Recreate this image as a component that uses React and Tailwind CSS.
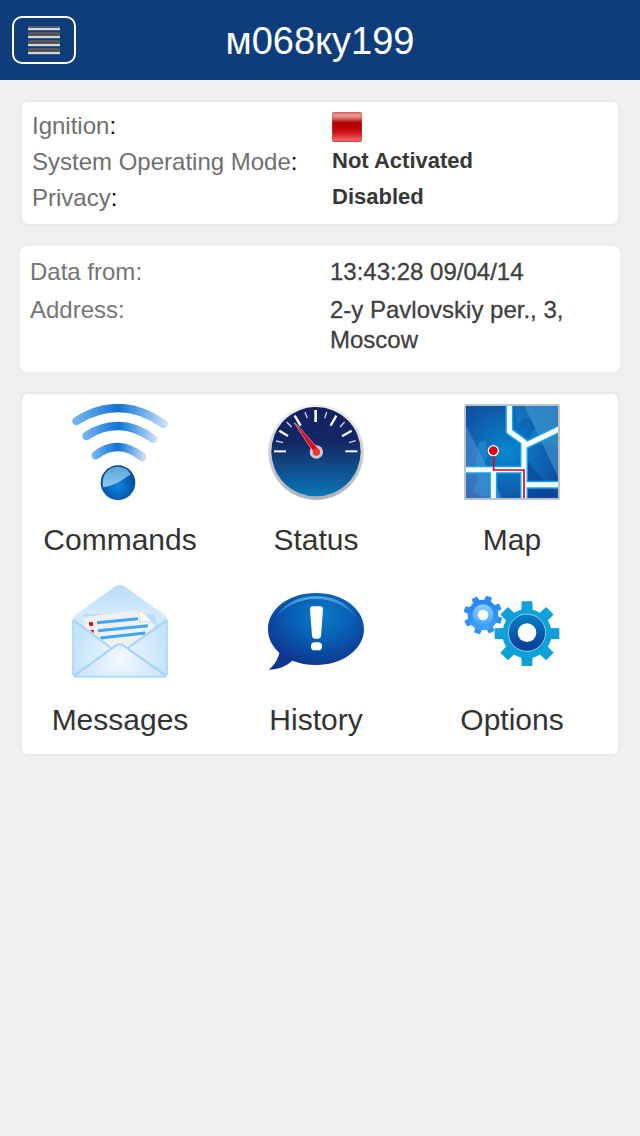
import React from "react";

function MenuIcon() {
  return (
    <svg viewBox="0 0 36 32" className="h-8 w-9" aria-hidden="true">
      <rect x="2" y="2" width="32" height="2" fill="#50596a" />
      {[4, 12, 20, 28].map((y) => (
        <g key={y}>
          {y > 4 && <rect x="2" y={y - 4} width="32" height="4" fill="#55565a" />}
          <rect x="2" y={y} width="32" height="2" fill="#d6d6d6" />
          <rect x="2" y={y + 2} width="32" height="1" fill="#6b7c98" opacity=".5" />
        </g>
      ))}
    </svg>
  );
}

function IgnitionOff() {
  return (
    <svg viewBox="0 0 30 30" className="h-[30px] w-[30px]" role="img" aria-label="Off">
      <defs>
        <linearGradient id="ign" x1="0" y1="0" x2="0" y2="1">
          <stop offset="0" stopColor="#d86a66" />
          <stop offset=".12" stopColor="#e59a94" />
          <stop offset=".26" stopColor="#cf4a45" />
          <stop offset=".34" stopColor="#b00a08" />
          <stop offset=".5" stopColor="#b80000" />
          <stop offset=".7" stopColor="#d2161a" />
          <stop offset=".93" stopColor="#f06468" />
          <stop offset="1" stopColor="#d04044" />
        </linearGradient>
      </defs>
      <rect width="30" height="30" rx="2" fill="url(#ign)" />
      <rect x=".5" y=".5" width="29" height="29" rx="2" fill="none" stroke="#d04a4a" strokeOpacity=".4" />
    </svg>
  );
}

function CommandsIcon() {
  return (
    <svg viewBox="36 42 288 288" className="h-24 w-24" aria-hidden="true">
      <defs>
        <linearGradient id="wave" gradientUnits="userSpaceOnUse" x1="36" y1="0" x2="324" y2="0">
          <stop offset="0" stopColor="#7cb8f0" />
          <stop offset=".48" stopColor="#1173d4" />
          <stop offset=".7" stopColor="#5ba3e6" />
          <stop offset="1" stopColor="#d3e6fa" />
        </linearGradient>
        <linearGradient id="waveMid" gradientUnits="userSpaceOnUse" x1="66" y1="0" x2="293" y2="0">
          <stop offset="0" stopColor="#7cb8f0" />
          <stop offset=".48" stopColor="#1173d4" />
          <stop offset=".7" stopColor="#5ba3e6" />
          <stop offset="1" stopColor="#d3e6fa" />
        </linearGradient>
        <linearGradient id="waveLow" gradientUnits="userSpaceOnUse" x1="94" y1="0" x2="259" y2="0">
          <stop offset="0" stopColor="#7cb8f0" />
          <stop offset=".48" stopColor="#1173d4" />
          <stop offset=".7" stopColor="#5ba3e6" />
          <stop offset="1" stopColor="#d3e6fa" />
        </linearGradient>
        <radialGradient id="ball" cx=".5" cy=".6" r=".55">
          <stop offset="0" stopColor="#0a86e4" />
          <stop offset=".6" stopColor="#0563b6" />
          <stop offset="1" stopColor="#024688" />
        </radialGradient>
        <linearGradient id="ballTop" x1="0" y1="0" x2="0" y2="1">
          <stop offset="0" stopColor="#5aa5da" />
          <stop offset="1" stopColor="#8cc8ee" />
        </linearGradient>
      </defs>
      <g fill="none" strokeWidth="25" strokeLinecap="round">
        <path d="M49 93Q108 54 176 54T311 102" stroke="url(#wave)" />
        <path d="M79 138Q122 108 175 108T280 147" stroke="url(#waveMid)" />
        <path d="M107 196Q138 171 174 171T247 201" stroke="url(#waveLow)" />
      </g>
      <circle cx="174" cy="278" r="52" fill="url(#ball)" />
      <path d="M130 292C122 262 140 230 174 230C194 230 208 241 212 254C187 265 182 282 130 292Z" fill="url(#ballTop)" />
    </svg>
  );
}

const TICKS = [
  [54, 184, 90, 184, 6], [60, 153, 81, 158, 4], [70, 122, 96, 138, 7],
  [92, 96, 107, 111, 4], [116, 77, 134, 107, 7], [147, 67, 154, 85, 4],
  [179, 60, 179, 96, 8], [212, 66, 206, 85, 4], [241, 77, 224, 107, 7],
  [266, 96, 252, 111, 4], [287, 122, 258, 139, 7], [299, 152, 279, 158, 4],
  [268, 184, 304, 184, 6],
];

function StatusIcon() {
  return (
    <svg viewBox="36 42 288 288" className="h-24 w-24" aria-hidden="true">
      <defs>
        <linearGradient id="dial" x1="0" y1="0" x2="0" y2="1">
          <stop offset="0" stopColor="#142060" />
          <stop offset=".4" stopColor="#142766" />
          <stop offset=".6" stopColor="#11437f" />
          <stop offset="1" stopColor="#0a76b9" />
        </linearGradient>
        <linearGradient id="rim" x1="0" y1="0" x2="0" y2="1">
          <stop offset="0" stopColor="#eeeeee" />
          <stop offset="1" stopColor="#aeb1b5" />
        </linearGradient>
      </defs>
      <circle cx="180" cy="187" r="143" fill="url(#rim)" />
      <circle cx="180" cy="185" r="134" fill="url(#dial)" />
      {TICKS.map(([x1, y1, x2, y2, w]) => (
        <line key={x1} x1={x1} y1={y1} x2={x2} y2={y2} stroke="#fff" strokeWidth={w} opacity={w === 4 ? 0.8 : 1} />
      ))}
      <circle cx="181" cy="186" r="20" fill="#c9ccd1" />
      <path d="M115 99L121 102L189 179L175 190Z" fill="#e3001b" stroke="#f3b8bd" strokeWidth="2" />
      <circle cx="181" cy="186" r="11" fill="#ee352e" />
    </svg>
  );
}

function MapIcon() {
  const roads = ["M172 42V124L216 156V330", "M216 168L324 116", "M36 239H216", "M124 239V330", "M216 284H324"];
  return (
    <svg viewBox="36 42 288 288" className="h-24 w-24" aria-hidden="true">
      <defs>
        <radialGradient id="land" cx=".45" cy=".5" r=".65">
          <stop offset="0" stopColor="#0788cf" />
          <stop offset="1" stopColor="#114b9d" />
        </radialGradient>
      </defs>
      <rect x="36" y="42" width="288" height="288" rx="5" fill="#bcc4cb" />
      <svg x="42" y="48" width="276" height="276" viewBox="42 48 276 276">
        <rect x="42" y="48" width="276" height="276" fill="url(#land)" />
        <path d="M36 95L110 239L153 330H36Z" fill="#73a3dc" opacity=".4" />
        <path d="M215 42L320 265V42Z" fill="#53a2d2" opacity=".5" />
        <path d="M195 103L214 84L241 91L250 110L234 140L256 165H300L324 178V42H185Z" fill="#2aa0d8" opacity=".3" />
        <path d="M80 160Q94 146 103 155L105 200L90 230L110 239V320Q80 320 62 304L78 270L72 210Z" fill="#36a1de" opacity=".4" />
        <path d="M216 195L245 239L292 284L320 330H216Z" fill="#0b3f93" opacity=".55" />
        <g fill="none" stroke="#14a5e8" strokeWidth="24">
          {roads.map((d) => <path key={d} d={d} />)}
        </g>
        <g fill="none" stroke="#fff" strokeWidth="15">
          {roads.map((d) => <path key={d} d={d} />)}
        </g>
        <path d="M125 182V240H216V330" fill="none" stroke="#e2001a" strokeWidth="5" />
        <circle cx="124" cy="182" r="15" fill="#e2001a" stroke="#fff" strokeWidth="4" />
      </svg>
    </svg>
  );
}

function MessagesIcon() {
  return (
    <svg viewBox="36 27 288 288" className="h-24 w-24" aria-hidden="true">
      <defs>
        <linearGradient id="flap" x1="0" y1="0" x2="0" y2="1">
          <stop offset="0" stopColor="#b9dcfa" />
          <stop offset=".3" stopColor="#d3e9fc" />
          <stop offset="1" stopColor="#cde6fc" />
        </linearGradient>
        <radialGradient id="front" gradientUnits="userSpaceOnUse" cx="180" cy="250" r="150">
          <stop offset="0" stopColor="#f2f8ff" />
          <stop offset="1" stopColor="#c3e2fc" />
        </radialGradient>
      </defs>
      <path d="M36 136Q38 126 48 119L165 34Q179 26 193 34L313 119Q322 126 324 136V296Q322 308 310 308H50Q38 308 36 296Z" fill="url(#flap)" />
      <path d="M72 118H276Q288 120 287 136V205H74V130Q68 124 72 118Z" fill="#b9dcfb" />
      <path d="M69 134Q70 126 78 125L236 106Q262 124 284 148L281 170L180 240L79 170Z" fill="#f1f0ef" />
      <path d="M234 106Q242 124 239 141Q256 136 277 143Q260 118 234 106Z" fill="#fff" stroke="#c9c9c9" strokeWidth="2" />
      <path d="M87 142L99 141V152L88 153ZM91 165L101 164V175Z" fill="#e2001a" />
      <path d="M111 143L234 131M114 167L264 152M121 189L256 174" stroke="#3ba7f8" strokeWidth="9" />
      <path d="M38 135L152 218Q179 196 205 218L322 135V296Q321 307 310 307H50Q39 307 38 296Z" fill="url(#front)" />
      <path d="M40 135L152 218M320 135L205 218" fill="none" stroke="#a9d6fc" strokeWidth="7" />
      <path d="M44 301L164 214Q179 202 194 214L317 301" fill="none" stroke="#a3d2fb" strokeWidth="6" />
      <path d="M39 134V294Q40 305 52 305H309Q320 305 321 294V134" fill="none" stroke="#b2dafc" strokeWidth="5" />
    </svg>
  );
}

function HistoryIcon() {
  return (
    <svg viewBox="36 27 288 288" className="h-24 w-24" aria-hidden="true">
      <defs>
        <radialGradient id="bubble" cx=".55" cy=".3" r=".65">
          <stop offset="0" stopColor="#0b7cc6" />
          <stop offset=".5" stopColor="#085db2" />
          <stop offset="1" stopColor="#0e3791" />
        </radialGradient>
        <linearGradient id="shine" x1="0" y1="0" x2="0" y2="1">
          <stop offset="0" stopColor="#4fa8e0" />
          <stop offset="1" stopColor="#4fa8e0" stopOpacity=".1" />
        </linearGradient>
      </defs>
      <path d="M180 54C260 54 324 101 324 162S260 270 180 270C154 270 130 265 109 257C94 272 66 284 38 284C55 270 66 253 70 233C48 214 36 190 36 162C36 101 100 54 180 54Z" fill="url(#bubble)" />
      <path d="M56 134C78 88 124 64 180 64S282 88 302 132C278 96 232 72 180 72S82 96 56 134Z" fill="url(#shine)" />
      <path d="M162 102Q162 94 170 94H191Q201 94 201 102L195 183Q194 191 187 191H176Q169 191 168 183Z" fill="#fff" />
      <rect x="165" y="202" width="33" height="24" rx="11" fill="#fff" />
    </svg>
  );
}

function OptionsIcon() {
  return (
    <svg viewBox="36 27 288 288" className="h-24 w-24" aria-hidden="true">
      <defs>
        <linearGradient id="smallGear" x1="0" y1="0" x2="0" y2="1">
          <stop offset="0" stopColor="#2385ee" />
          <stop offset="1" stopColor="#3fa2fa" />
        </linearGradient>
        <linearGradient id="smallHub" x1="0" y1="0" x2="0" y2="1">
          <stop offset="0" stopColor="#8accfe" />
          <stop offset="1" stopColor="#48a6fb" />
        </linearGradient>
        <linearGradient id="bigHub" x1="0" y1="0" x2="0" y2="1">
          <stop offset="0" stopColor="#087fc4" />
          <stop offset="1" stopColor="#0a3a94" />
        </linearGradient>
      </defs>
      <g fill="#2c8ff2">
        {[18, 63, 108, 153, 198, 243, 288, 333].map((a) => (
          <path key={a} d="M82 82L84 62H102L104 82Z" transform={`rotate(${a} 93 120)`} />
        ))}
      </g>
      <circle cx="93" cy="120" r="46" fill="url(#smallGear)" />
      <circle cx="93" cy="119" r="31" fill="url(#smallHub)" />
      <circle cx="93" cy="120" r="16" fill="#fff" />
      <g fill="#0fa0da">
        {[0, 45, 90, 135, 180, 225, 270, 315].map((a) => (
          <path key={a} d="M208 110L209 79H241L242 110Z" transform={`rotate(${a} 225 176)`} />
        ))}
        <circle cx="225" cy="176" r="74" />
      </g>
      <circle cx="225" cy="173" r="56" fill="url(#bigHub)" stroke="#8bd0f2" strokeWidth="3" />
      <circle cx="225" cy="173" r="28" fill="#fff" />
    </svg>
  );
}

const TILES = [
  ["Commands", CommandsIcon],
  ["Status", StatusIcon],
  ["Map", MapIcon],
  ["Messages", MessagesIcon],
  ["History", HistoryIcon],
  ["Options", OptionsIcon],
];

function StateRow({ label, children }) {
  return (
    <div className="flex h-9">
      <dt className="w-[300px] shrink-0 text-2xl leading-9 text-black">
        <span className="text-[#707070]">{label}</span>:
      </dt>
      <dd className="text-[22px] leading-[34px] font-bold text-[#383838]">{children}</dd>
    </div>
  );
}

function DataRow({ label, children }) {
  return (
    <div className="flex text-2xl leading-[30px]">
      <dt className="w-[300px] shrink-0 text-[#757575]">{label}:</dt>
      <dd className="text-[#404040] [-webkit-text-stroke:0.3px_#404040]">{children}</dd>
    </div>
  );
}

export default function App() {
  return (
    <div className="min-h-screen bg-[#efefef] font-['Liberation_Sans',Arial,sans-serif]">
      <header className="flex h-20 items-center bg-[#0f3d7b] px-3">
        <button type="button" aria-label="Menu" className="flex h-12 w-16 items-center justify-center rounded-[10px] border-2 border-white">
          <MenuIcon />
        </button>
        <h1 className="flex-1 pt-0.5 pr-16 text-center text-[38px] leading-[44px] text-white">м068ку199</h1>
      </header>
      <main className="flex flex-col gap-5 p-5">
        <dl className="rounded-lg border-2 border-[#e9e9e9] bg-white px-2.5 pt-1.5 pb-2">
          <StateRow label="Ignition">
            <span className="block pt-1"><IgnitionOff /></span>
          </StateRow>
          <StateRow label="System Operating Mode">Not Activated</StateRow>
          <StateRow label="Privacy">Disabled</StateRow>
        </dl>
        <dl className="flex flex-col gap-2 rounded-lg bg-white px-2.5 pt-[11px] pb-[17px]">
          <DataRow label="Data from">13:43:28 09/04/14</DataRow>
          <DataRow label="Address">2-y Pavlovskiy per., 3, Moscow</DataRow>
        </dl>
        <nav className="grid grid-cols-3 rounded-lg border-2 border-[#e9e9e9] bg-white pr-2">
          {TILES.map(([label, Icon]) => (
            <button key={label} type="button" className="flex flex-col items-center pt-2.5 pb-4 text-[#333333]">
              <Icon />
              <span className="mt-[22px] text-[30px] leading-9">{label}</span>
            </button>
          ))}
        </nav>
      </main>
    </div>
  );
}
